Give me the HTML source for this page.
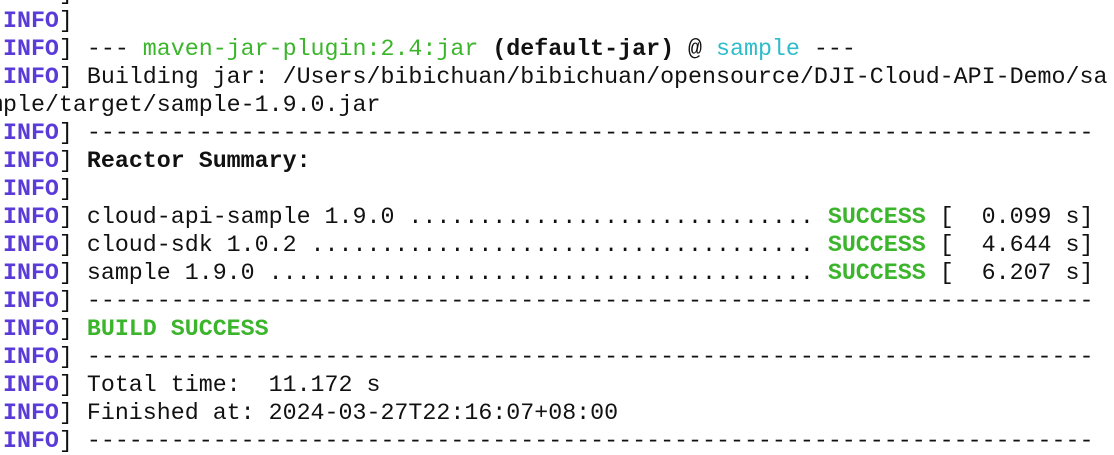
<!DOCTYPE html>
<html><head><meta charset="utf-8"><style>
html,body{margin:0;padding:0;background:#fff;width:1114px;height:450px;overflow:hidden}
pre{position:absolute;left:-11px;top:-21px;margin:0;font-family:"Liberation Mono",monospace;font-size:23.3px;line-height:28px;color:#111;white-space:pre}
.i{color:#5a3bd8;font-weight:bold}
.g{color:#3bb52b}
.gb{color:#3bb52b;font-weight:bold}
.c{color:#2ebcca}
b{font-weight:bold}
.f{color:#bbb}
</style></head><body><pre>[<span class="i">INFO</span>] <span class="f">   . . . . . . . . . . . . . . .</span>
[<span class="i">INFO</span>]
[<span class="i">INFO</span>] --- <span class="g">maven-jar-plugin:2.4:jar</span> <b>(default-jar)</b> @ <span class="c">sample</span> ---
[<span class="i">INFO</span>] Building jar: /Users/bibichuan/bibichuan/opensource/DJI-Cloud-API-Demo/sa
mple/target/sample-1.9.0.jar
[<span class="i">INFO</span>] ------------------------------------------------------------------------
[<span class="i">INFO</span>] <b>Reactor Summary:</b>
[<span class="i">INFO</span>]
[<span class="i">INFO</span>] cloud-api-sample 1.9.0 ............................. <span class="gb">SUCCESS</span> [  0.099 s]
[<span class="i">INFO</span>] cloud-sdk 1.0.2 .................................... <span class="gb">SUCCESS</span> [  4.644 s]
[<span class="i">INFO</span>] sample 1.9.0 ....................................... <span class="gb">SUCCESS</span> [  6.207 s]
[<span class="i">INFO</span>] ------------------------------------------------------------------------
[<span class="i">INFO</span>] <span class="gb">BUILD SUCCESS</span>
[<span class="i">INFO</span>] ------------------------------------------------------------------------
[<span class="i">INFO</span>] Total time:  11.172 s
[<span class="i">INFO</span>] Finished at: 2024-03-27T22:16:07+08:00
[<span class="i">INFO</span>] ------------------------------------------------------------------------
</pre></body></html>
